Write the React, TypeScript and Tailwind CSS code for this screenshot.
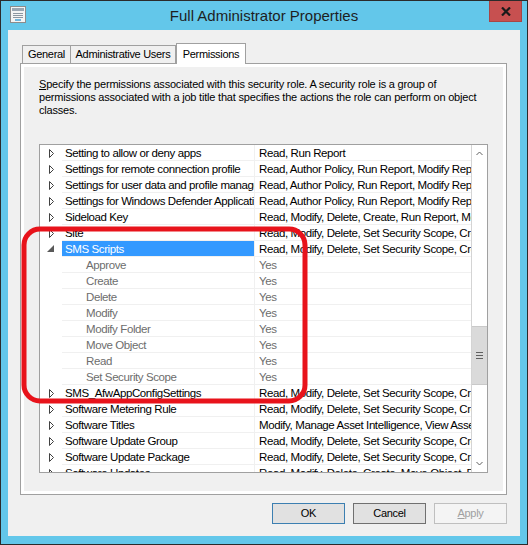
import * as React from 'react';

type Row = {
  name: string;
  perms: string;
  kind: 'collapsed' | 'expanded' | 'child';
  selected?: boolean;
};

const SCOPE = 'Read, Modify, Delete, Set Security Scope, Create, Run Report';
const AUTHOR = 'Read, Author Policy, Run Report, Modify Report, Set Security Scope';

const rows: Row[] = [
  { name: 'Setting to allow or deny apps', perms: 'Read, Run Report', kind: 'collapsed' },
  { name: 'Settings for remote connection profile', perms: AUTHOR, kind: 'collapsed' },
  { name: 'Settings for user data and profile management', perms: AUTHOR, kind: 'collapsed' },
  { name: 'Settings for Windows Defender Application Guard', perms: AUTHOR, kind: 'collapsed' },
  { name: 'Sideload Key', perms: 'Read, Modify, Delete, Create, Run Report, Modify Report', kind: 'collapsed' },
  { name: 'Site', perms: SCOPE, kind: 'collapsed' },
  { name: 'SMS Scripts', perms: SCOPE, kind: 'expanded', selected: true },
  { name: 'Approve', perms: 'Yes', kind: 'child' },
  { name: 'Create', perms: 'Yes', kind: 'child' },
  { name: 'Delete', perms: 'Yes', kind: 'child' },
  { name: 'Modify', perms: 'Yes', kind: 'child' },
  { name: 'Modify Folder', perms: 'Yes', kind: 'child' },
  { name: 'Move Object', perms: 'Yes', kind: 'child' },
  { name: 'Read', perms: 'Yes', kind: 'child' },
  { name: 'Set Security Scope', perms: 'Yes', kind: 'child' },
  { name: 'SMS_AfwAppConfigSettings', perms: SCOPE, kind: 'collapsed' },
  { name: 'Software Metering Rule', perms: SCOPE, kind: 'collapsed' },
  { name: 'Software Titles', perms: 'Modify, Manage Asset Intelligence, View Asset Intelligence', kind: 'collapsed' },
  { name: 'Software Update Group', perms: SCOPE, kind: 'collapsed' },
  { name: 'Software Update Package', perms: SCOPE, kind: 'collapsed' },
  { name: 'Software Updates', perms: 'Read, Modify, Delete, Create, Move Object, Run Report', kind: 'collapsed' },
];

function Expander({ kind }: { kind: Row['kind'] }) {
  if (kind === 'child') return <div className="w-[22px] shrink-0" />;
  return (
    <svg width="22" height="16" viewBox="0 0 22 16" className="shrink-0">
      {kind === 'expanded' ? (
        <path d="M14 4 V11 H7 Z" fill="#595959" />
      ) : (
        <path d="M9.5 4.5 V12.5 L13.5 8.5 Z" fill="none" stroke="#404040" />
      )}
    </svg>
  );
}

function ListRow({ row }: { row: Row }) {
  const child = row.kind === 'child';
  return (
    <div className="flex h-[16px] leading-[16px]">
      <Expander kind={row.kind} />
      <div
        className={
          'w-[193px] shrink-0 overflow-hidden whitespace-nowrap border-r border-b border-[#f0f0f0] ' +
          (row.selected ? 'bg-[#3399ff] text-white ' : '') +
          (child ? 'pl-[24px] text-[#6d6d6d]' : 'pl-[3px]')
        }
      >
        {row.name}
      </div>
      <div
        className={
          'min-w-0 flex-1 overflow-hidden whitespace-nowrap border-b border-[#f0f0f0] pl-[4px] ' +
          (child ? 'text-[#6d6d6d]' : '')
        }
      >
        {row.perms}
      </div>
    </div>
  );
}

function ScrollBar() {
  return (
    <div className="flex w-[16px] shrink-0 flex-col border-l border-[#d4d4d4] bg-white">
      <div className="h-[17px] shrink-0">
        <svg width="15" height="17" viewBox="0 0 15 17">
          <path d="M4.5 10 L7.5 7 L10.5 10" fill="none" stroke="#606060" />
        </svg>
      </div>
      <div className="flex-1">
        <div className="mt-[164px] flex h-[59px] flex-col items-center justify-center gap-[2px] border-y border-[#c9c9c9] bg-[#dadada]">
          <div className="h-px w-[7px] bg-[#606060]" />
          <div className="h-px w-[7px] bg-[#606060]" />
          <div className="h-px w-[7px] bg-[#606060]" />
        </div>
      </div>
      <div className="h-[17px] shrink-0">
        <svg width="15" height="17" viewBox="0 0 15 17">
          <path d="M4.5 7 L7.5 10 L10.5 7" fill="none" stroke="#606060" />
        </svg>
      </div>
    </div>
  );
}

function TitleIcon() {
  return (
    <svg width="16" height="17" viewBox="0 0 16 17">
      <rect x="0.5" y="0.5" width="15" height="16" fill="#f4f4f4" stroke="#8c8c8c" />
      <rect x="2" y="2" width="12" height="3" fill="#9aa6b2" />
      <rect x="3" y="7" width="10" height="1" fill="#8c96a0" />
      <rect x="3" y="9" width="10" height="1" fill="#8c96a0" />
      <rect x="3" y="11" width="10" height="1" fill="#8c96a0" />
      <rect x="5" y="13" width="6" height="2" fill="#6fb6dd" />
    </svg>
  );
}

export default function App() {
  return (
    <div className="relative h-[545px] w-[528px] font-['Liberation_Sans',Arial,sans-serif] text-black">
      <div className="flex h-full flex-col border border-[#2b2b2b] bg-[#63c7ea]">
        <div className="grid h-[29px] shrink-0 grid-cols-[1fr_auto_1fr] items-start">
          <div className="pt-[5px] pl-[9px]">
            <TitleIcon />
          </div>
          <div className="pt-[5px] text-[15px] leading-[19px] text-[#1e1e1e]">
            Full Administrator Properties
          </div>
          <div className="flex justify-end pr-[5px]">
            <div className="flex h-[21px] w-[33px] items-center justify-center border border-t-0 border-[#a84545] bg-[#c75050]">
              <svg width="10" height="9" viewBox="0 0 10 9">
                <path d="M1 0.5 L9 8.5 M9 0.5 L1 8.5" stroke="#1a1a1a" strokeWidth="2.2" />
              </svg>
            </div>
          </div>
        </div>

        <div className="mx-[7px] flex h-[506px] shrink-0 flex-col bg-[#f0f0f0] pt-[13px] pr-[13px] pl-[12px] text-[11px] tracking-[-0.3px]">
          <div className="flex h-[20px] items-end pl-[2px]">
            <div className="flex h-[18px] w-[49px] items-center justify-center border border-b-0 border-[#a0a0a0] bg-[#f0f0f0]">
              General
            </div>
            <div className="flex h-[18px] w-[105px] items-center justify-center border-t border-r border-[#a0a0a0] bg-[#f0f0f0]">
              Administrative Users
            </div>
            <div className="relative z-10 -mb-px flex h-[21px] w-[70px] items-center justify-center border border-b-0 border-[#a0a0a0] bg-white">
              Permissions
            </div>
          </div>

          <div className="flex h-[432px] flex-col border border-[#a0a0a0]">
            <div className="flex flex-1 flex-col border-[3px] border-white bg-[#f0f0f0] px-[15px] pt-[11px]">
              <p className="text-[11px] leading-[13px] tracking-[-0.2px]">
                <span className="underline">S</span>pecify the permissions associated with this security role. A security role is a group of
                <br />
                permissions associated with a job title that specifies the actions the role can perform on object
                <br />
                classes.
              </p>

              <div className="mt-[27px] flex h-[329px] w-[449px] border border-[#a0a0a0] bg-white text-[11.5px] tracking-[-0.4px]">
                <div className="min-w-0 flex-1 overflow-hidden">
                  {rows.map((r) => (
                    <ListRow key={r.name} row={r} />
                  ))}
                </div>
                <ScrollBar />
              </div>
            </div>
          </div>

          <div className="mt-[8px] flex justify-end gap-[8px]">
            <button className="flex h-[21px] w-[73px] items-center justify-center border border-[#3c7fb1] bg-[#e1e1e1]">
              OK
            </button>
            <button className="flex h-[21px] w-[73px] items-center justify-center border border-[#707070] bg-[#e1e1e1]">
              Cancel
            </button>
            <button className="flex h-[21px] w-[73px] items-center justify-center border border-[#bfbfbf] bg-[#f4f4f4] text-[#a0a0a0]">
              <span className="underline">A</span>pply
            </button>
          </div>
        </div>
      </div>

      <svg className="pointer-events-none absolute top-0 left-0" width="528" height="545" viewBox="0 0 528 545">
        <rect x="24" y="229" width="281" height="172" rx="16" fill="none" stroke="#e8131b" strokeWidth="5" />
      </svg>
    </div>
  );
}
